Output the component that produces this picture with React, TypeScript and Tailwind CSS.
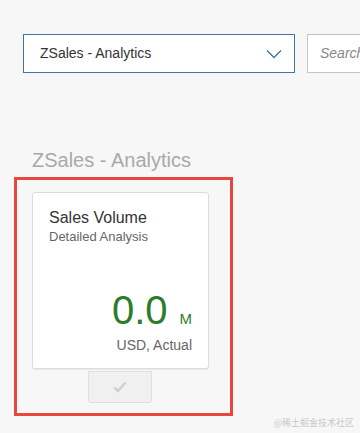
import { useState } from "react";

function ChevronDown() {
    return (
        <svg width="16" height="10" viewBox="0 0 16 10" fill="none">
            <path d="M1 1.5 L8 8.5 L15 1.5" stroke="#3f74a6" strokeWidth="1.3" />
        </svg>
    );
}

function CheckIcon() {
    return (
        <svg width="14" height="12" viewBox="0 0 14 12" fill="none">
            <path d="M1.5 6.5 L5 10 L12.5 1.5" stroke="#cfcfcf" strokeWidth="2.4" />
        </svg>
    );
}

function App() {
    const [query, setQuery] = useState('');

    return (
        <div className="relative w-[360px] h-[433px] overflow-hidden bg-[#f7f7f7] font-['Liberation_Sans',Arial,sans-serif]">
            <div className="flex gap-[12px] pt-[34px] pl-[23px]">
                <div className="flex items-center justify-between shrink-0 w-[272px] h-[39px] bg-white border border-[#3f74a6] pl-[16px] pr-[12px]">
                    <span className="text-[14px] text-[#333]">ZSales - Analytics</span>
                    <ChevronDown />
                </div>
                <div className="flex items-center shrink-0 w-[80px] h-[39px] bg-white border border-[#c4c4c4] pl-[12px]">
                    <input
                        className="w-full bg-transparent text-[14px] italic text-[#333] placeholder:text-[#888] outline-none"
                        placeholder="Search"
                        value={query}
                        onChange={e => setQuery(e.target.value)}
                    />
                </div>
            </div>

            <div className="mt-[75px] pl-[32px] text-[20px] leading-[24px] text-[#a9a9a9]">ZSales - Analytics</div>

            <div className="mt-[5px] ml-[14px] w-[219px] h-[239px] border-[3px] border-[#e8473f] pt-[12px] pl-[15px]">
                <div className="flex flex-col w-[177px] h-[177px] bg-white border border-[#dcdcdc] rounded-[3px] shadow-[0_1px_1px_rgba(0,0,0,0.06)] px-[16px] pt-[15px]">
                    <div className="text-[16px] leading-[19px] text-[#333]">Sales Volume</div>
                    <div className="text-[13px] leading-[16px] text-[#666] mt-[2px]">Detailed Analysis</div>
                    <div className="flex items-baseline justify-end mt-[45px] text-[#2b7d2b]">
                        <span className="text-[40px] leading-[40px]">0.0</span>
                        <span className="text-[15px] ml-[12px]">M</span>
                    </div>
                    <div className="text-right text-[14px] leading-[16px] text-[#666] mt-[6px]">USD, Actual</div>
                </div>
                <div className="flex items-center justify-center ml-[56px] w-[64px] h-[32px] mt-[2px] bg-[#f0f0f0] border border-[#dedede] rounded-b-[3px]">
                    <CheckIcon />
                </div>
            </div>

            <div className="absolute right-[6px] bottom-[4px] text-[9px] text-[#c8c8c8] font-['Noto_Sans_CJK_SC',sans-serif]">@稀土掘金技术社区</div>
        </div>
    );
}

export default App;
